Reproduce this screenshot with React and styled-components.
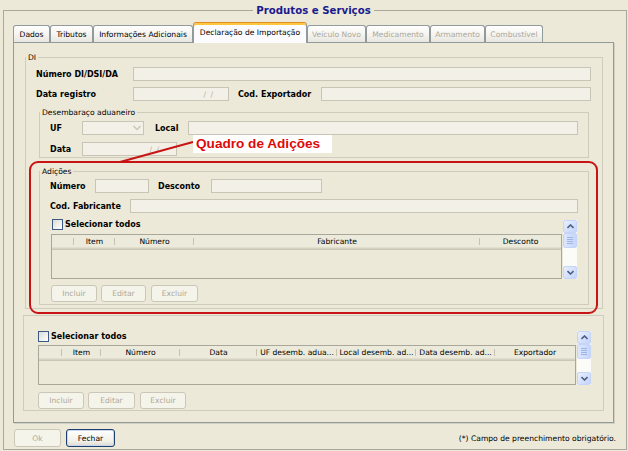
import React from 'react';
import styled, { createGlobalStyle, css } from 'styled-components';

const GlobalStyle = createGlobalStyle`
  * { box-sizing: border-box; }
  html, body { margin: 0; padding: 0; background: #ECE9D8; }
  body {
    font-family: "DejaVu Sans", Verdana, sans-serif;
    font-size: 7.6px;
    color: #000;
  }
`;

const Screen = styled.div`
  position: relative;
  width: 628px;
  height: 451px;
  overflow: hidden;
  background: #ECE9D8;
  padding: 3px 0 0 3px;
`;

const Frame = styled.fieldset`
  margin: 0;
  width: 624px;
  min-width: 0;
  padding: 4px 12px 2px 9px;
  border: 1px solid #A9A89C;
  display: flex;
  flex-direction: column;
`;

const FrameTitle = styled.legend`
  margin: 0 auto;
  padding: 0 3px;
  font-weight: bold;
  font-size: 10.2px;
  line-height: 15px;
  color: #1B1B8F;
`;

const TabStrip = styled.div`
  display: flex;
  align-items: flex-end;
  height: 21px;
  margin-bottom: -1px;
  position: relative;
  z-index: 1;
`;

const Tab = styled.div`
  flex: none;
  width: ${p => p.$w}px;
  height: 17px;
  margin-bottom: 1px;
  border: 1px solid #919B9C;
  border-bottom: none;
  border-radius: 3px 3px 0 0;
  background: linear-gradient(#FFFFFF, #F4F3EF 55%, #E7E6DF);
  display: flex;
  align-items: center;
  justify-content: center;
  white-space: nowrap;
  color: ${p => (p.$disabled ? '#ACA899' : '#000')};
  ${p => p.$active && css`
    height: 21px;
    margin-bottom: 0;
    background: #FCFCFE;
    border-top: 1px solid #E68B2C;
    box-shadow: inset 0 2px 0 #FFC83C;
    padding-bottom: 1px;
  `}
`;

const TabPanel = styled.div`
  height: 381px;
  border: 1px solid #919B9C;
  box-shadow: 1px 1px 0 #D3D0C2;
  padding-top: 9px;
  display: flex;
  flex-direction: column;
  background: #ECE9D8;
`;

const Group = styled.fieldset`
  margin: ${p => p.$m};
  padding: 0;
  min-width: 0;
  border: 1px solid #CFCCBD;
`;

const GroupTitle = styled.legend`
  margin: 0;
  padding: 0 2px;
  font-size: 7.6px;
  line-height: 11px;
`;

const GroupBody = styled.div`
  padding: ${p => p.$p};
  display: flex;
  flex-direction: column;
`;

const PlainBox = styled.div`
  margin: 6px 9px 0 9px;
  padding: 15px 12px 1px 14px;
  border: 1px solid #CFCCBD;
  display: flex;
  flex-direction: column;
`;

const Row = styled.div`
  display: flex;
  align-items: center;
  height: 14px;
  margin-top: ${p => p.$mt || 0}px;
`;

const Label = styled.span`
  flex: none;
  width: ${p => p.$w}px;
  margin-left: ${p => p.$ml || 0}px;
  font-weight: bold;
  font-size: 8px;
  white-space: nowrap;
`;

const Field = styled.div`
  height: 14px;
  flex: ${p => (p.$w ? 'none' : '1')};
  width: ${p => (p.$w ? `${p.$w}px` : 'auto')};
  border: 1px solid #C8C5B6;
  background: #F2F0E7;
  display: flex;
  align-items: center;
  justify-content: flex-end;
  padding-right: ${p => p.$pr || 0}px;
  color: #B5B2A3;
  font-size: 7.6px;
  letter-spacing: 1px;
`;

const ComboArrow = styled.svg`
  margin-right: 1px;
`;

const ScrollArea = styled.div`
  display: flex;
  height: ${p => p.$h}px;
  margin-top: ${p => p.$mt || 0}px;
  margin-left: ${p => p.$ml || 0}px;
`;

const ListCol = styled.div`
  flex: 1;
  min-width: 0;
  display: flex;
  flex-direction: column;
`;

const CheckRow = styled.div`
  flex: none;
  height: ${p => p.$h}px;
  padding-left: ${p => p.$pl || 0}px;
  display: flex;
  align-items: flex-start;
  gap: 2px;
`;

const CheckBox = styled.span`
  flex: none;
  width: 11px;
  height: 11px;
  border: 1px solid #3C5A84;
  background: linear-gradient(135deg, #DCDCD6, #FFFFFF);
`;

const CheckText = styled.span`
  font-weight: bold;
  font-size: 8px;
  line-height: 11px;
  white-space: nowrap;
`;

const Table = styled.div`
  flex: 1;
  border: 1px solid #A9A799;
  display: flex;
  flex-direction: column;
  background: #ECE9D8;
`;

const THead = styled.div`
  flex: none;
  display: grid;
  grid-template-columns: ${p => p.$cols};
  height: 15px;
  background: #EBEADB;
  border-bottom: 1px solid #CBC7B8;
  box-shadow: inset 0 -1px 0 #D6D2C2, inset 0 -2px 0 #E2DECD;
`;

const HeadCell = styled.div`
  position: relative;
  display: flex;
  align-items: center;
  justify-content: center;
  white-space: nowrap;
  overflow: hidden;
  padding-bottom: 2px;
  &::after {
    content: '';
    position: absolute;
    right: 0;
    top: 3px;
    bottom: 4px;
    width: 1px;
    background: #C5C2AF;
  }
  ${p => p.$last && css`
    &::after { display: none; }
  `}
`;

const TBody = styled.div`
  flex: 1;
`;

const VScroll = styled.div`
  flex: none;
  width: 14px;
  margin: ${p => p.$m};
  display: flex;
  flex-direction: column;
  background: #FBFBF8;
`;

const ScrollBtn = styled.div`
  flex: none;
  height: 13px;
  border: 1px solid #C6D4F7;
  border-radius: 2px;
  background: linear-gradient(135deg, #E9F0FE, #C3D4FA);
  display: flex;
  align-items: center;
  justify-content: center;
`;

const Thumb = styled.div`
  flex: none;
  height: 15px;
  border: 1px solid #C6D4F7;
  border-radius: 2px;
  background: linear-gradient(90deg, #DCE6FD, #C6D6FA);
  display: flex;
  flex-direction: column;
  align-items: center;
  justify-content: center;
  gap: 1px;
`;

const Grip = styled.span`
  width: 6px;
  height: 1px;
  background: #9FB5E6;
`;

const Track = styled.div`
  flex: 1;
`;

const ButtonRow = styled.div`
  display: flex;
  margin-top: ${p => p.$mt}px;
  margin-left: ${p => p.$ml || 0}px;
`;

const Btn = styled.button`
  flex: none;
  width: ${p => p.$w}px;
  height: ${p => p.$h || 17}px;
  margin: 0 0 0 ${p => p.$gap || 0}px;
  padding: 0;
  font-family: inherit;
  font-size: 7.6px;
  border-radius: 3px;
  border: 1px solid #CAC7B8;
  background: #F5F4EB;
  color: #ACA899;
  ${p => p.$primary && css`
    border-color: #1D3F6E;
    background: linear-gradient(#FFFFFF, #F1F0EA 70%, #DCD8CD);
    box-shadow: inset 0 0 0 1px #C9D6EE;
    color: #000;
  `}
`;

const Footer = styled.div`
  display: flex;
  align-items: center;
  height: 18px;
  margin-top: 6px;
  padding-left: 1px;
`;

const Note = styled.span`
  margin-left: auto;
  margin-right: -2px;
  font-size: 7.6px;
  white-space: nowrap;
`;

const Callout = styled.div`
  position: absolute;
  left: 29px;
  top: 161px;
  width: 569px;
  height: 153px;
  border: 2px solid #C81414;
  border-radius: 9px;
  pointer-events: none;
`;

const CalloutLine = styled.svg`
  position: absolute;
  left: 116px;
  top: 138px;
  pointer-events: none;
`;

const CalloutLabel = styled.div`
  position: absolute;
  left: 193px;
  top: 135px;
  width: 139px;
  height: 18px;
  padding-left: 3px;
  background: #FFFFFF;
  color: #DD0A0A;
  font-family: "Liberation Sans", Arial, sans-serif;
  font-weight: bold;
  font-size: 13.6px;
  line-height: 18px;
  white-space: nowrap;
`;

const Up = () => (
  <svg width="7" height="5" viewBox="0 0 7 5">
    <path d="M0.5 4 L3.5 1 L6.5 4" fill="none" stroke="#4D6185" strokeWidth="1.6" />
  </svg>
);
const Down = () => (
  <svg width="7" height="5" viewBox="0 0 7 5">
    <path d="M0.5 1 L3.5 4 L6.5 1" fill="none" stroke="#4D6185" strokeWidth="1.6" />
  </svg>
);

const ScrollBar = ({ m }) => (
  <VScroll $m={m}>
    <ScrollBtn><Up /></ScrollBtn>
    <Thumb><Grip /><Grip /><Grip /><Grip /></Thumb>
    <Track />
    <ScrollBtn><Down /></ScrollBtn>
  </VScroll>
);

const DataTable = ({ cols, heads }) => (
  <Table>
    <THead $cols={cols}>
      {heads.map((h, i) => (
        <HeadCell key={i} $last={i === heads.length - 1}>{h}</HeadCell>
      ))}
    </THead>
    <TBody />
  </Table>
);

const tabs = [
  { t: 'Dados', w: 37 },
  { t: 'Tributos', w: 43 },
  { t: 'Informações Adicionais', w: 100 },
  { t: 'Declaração de Importação', w: 114, active: true },
  { t: 'Veículo Novo', w: 59, disabled: true },
  { t: 'Medicamento', w: 64, disabled: true },
  { t: 'Armamento', w: 55, disabled: true },
  { t: 'Combustível', w: 58, disabled: true },
];

export default function App() {
  return (
    <>
      <GlobalStyle />
      <Screen>
        <Frame>
          <FrameTitle>Produtos e Serviços</FrameTitle>
          <TabStrip>
            {tabs.map(tb => (
              <Tab key={tb.t} $w={tb.w} $active={tb.active} $disabled={tb.disabled}>{tb.t}</Tab>
            ))}
          </TabStrip>
          <TabPanel>
            <Group $m="0 10px 0 11px">
              <GroupTitle>DI</GroupTitle>
              <GroupBody $p="4px 11px 3px 10px">
                <Row>
                  <Label $w={97}>Número DI/DSI/DA</Label>
                  <Field />
                </Row>
                <Row $mt={6}>
                  <Label $w={97}>Data registro</Label>
                  <Field $w={96} $pr={14}>/ /</Field>
                  <Label $w={83} $ml={9}>Cod. Exportador</Label>
                  <Field />
                </Row>

                <Group $m="6px 2px 0 3px">
                  <GroupTitle>Desembaraço aduaneiro</GroupTitle>
                  <GroupBody $p="3px 10px 1px 10px">
                    <Row>
                      <Label $w={32}>UF</Label>
                      <Field $w={62}>
                        <ComboArrow width="10" height="6" viewBox="0 0 10 6">
                          <path d="M1.5 1 L5 4.5 L8.5 1" fill="none" stroke="#C9C6B8" strokeWidth="1.5" />
                        </ComboArrow>
                      </Field>
                      <Label $w={33} $ml={11}>Local</Label>
                      <Field />
                    </Row>
                    <Row $mt={7}>
                      <Label $w={32}>Data</Label>
                      <Field $w={95} $pr={16}>/ /</Field>
                    </Row>
                  </GroupBody>
                </Group>

                <Group $m="8px 2px 0 3px">
                  <GroupTitle>Adições</GroupTitle>
                  <GroupBody $p="2px 10px 2px 10px">
                    <Row>
                      <Label $w={45}>Número</Label>
                      <Field $w={54} />
                      <Label $w={53} $ml={9}>Desconto</Label>
                      <Field $w={111} />
                    </Row>
                    <Row $mt={6}>
                      <Label $w={80}>Cod. Fabricante</Label>
                      <Field />
                    </Row>
                    <ScrollArea $h={60} $mt={6} $ml={1}>
                      <ListCol>
                        <CheckRow $h={15} $pl={1}>
                          <CheckBox />
                          <CheckText>Selecionar todos</CheckText>
                        </CheckRow>
                        <DataTable
                          cols="22px 41px 79px 286px 81px"
                          heads={['', 'Item', 'Número', 'Fabricante', 'Desconto']}
                        />
                      </ListCol>
                      <ScrollBar m="1px 1px 0 1px" />
                    </ScrollArea>
                    <ButtonRow $mt={6} $ml={1}>
                      <Btn $w={46}>Incluir</Btn>
                      <Btn $w={45} $gap={4}>Editar</Btn>
                      <Btn $w={47} $gap={5}>Excluir</Btn>
                    </ButtonRow>
                  </GroupBody>
                </Group>
              </GroupBody>
            </Group>

            <PlainBox>
              <ScrollArea $h={54}>
                <ListCol>
                  <CheckRow $h={14}>
                    <CheckBox />
                    <CheckText>Selecionar todos</CheckText>
                  </CheckRow>
                  <DataTable
                    cols="23px 39px 79px 77px 80px 79px 79px 80px"
                    heads={['', 'Item', 'Número', 'Data', 'UF desemb. adua...', 'Local desemb. ad...', 'Data desemb. ad...', 'Exportador']}
                  />
                </ListCol>
                <ScrollBar m="0 0 0 1px" />
              </ScrollArea>
              <ButtonRow $mt={7}>
                <Btn $w={46}>Incluir</Btn>
                <Btn $w={47} $gap={4}>Editar</Btn>
                <Btn $w={46} $gap={5}>Excluir</Btn>
              </ButtonRow>
            </PlainBox>
          </TabPanel>
          <Footer>
            <Btn $w={47} $h={18}>Ok</Btn>
            <Btn $w={49} $h={18} $gap={5} $primary>Fechar</Btn>
            <Note>(*) Campo de preenchimento obrigatório.</Note>
          </Footer>
        </Frame>

        <Callout />
        <CalloutLine width="80" height="28" viewBox="0 0 80 28">
          <line x1="4" y1="24" x2="77" y2="4" stroke="#C81414" strokeWidth="2" />
        </CalloutLine>
        <CalloutLabel>Quadro de Adições</CalloutLabel>
      </Screen>
    </>
  );
}
